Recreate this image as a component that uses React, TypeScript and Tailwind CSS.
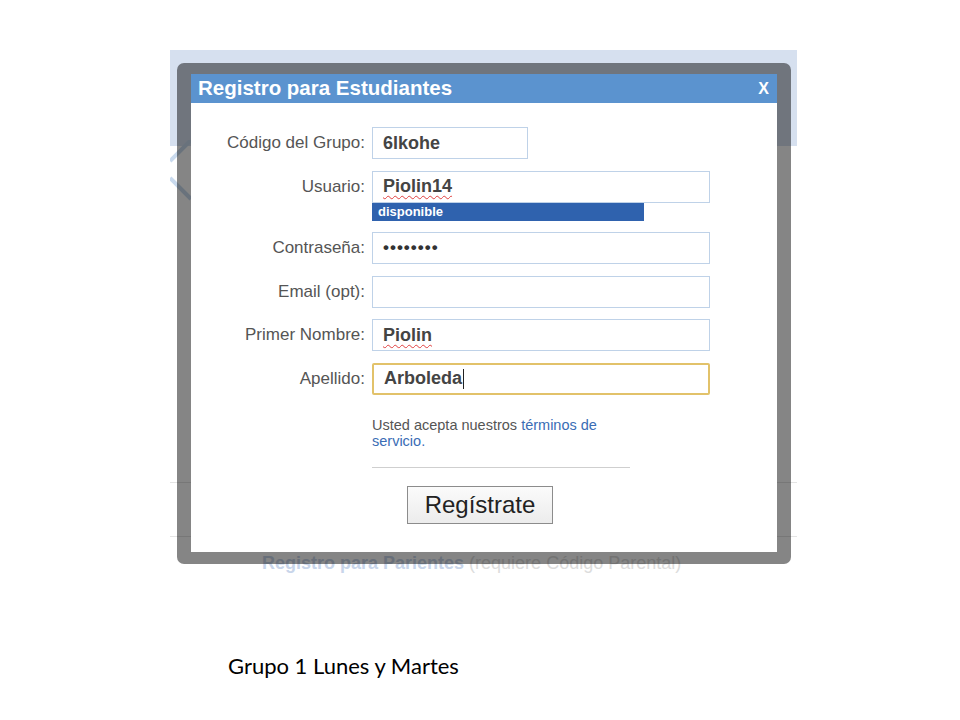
const fields = [
  { label: 'Código del Grupo:', value: '6lkohe', width: 'w-[156px]' },
  { label: 'Usuario:', value: 'Piolin14', width: 'w-[338px]', spell: true, hint: 'disponible' },
  { label: 'Contraseña:', value: '••••••••', width: 'w-[338px]', password: true },
  { label: 'Email (opt):', value: '', width: 'w-[338px]' },
  { label: 'Primer Nombre:', value: 'Piolin', width: 'w-[338px]', spell: true },
  { label: 'Apellido:', value: 'Arboleda', width: 'w-[338px]', focus: true },
];

function Field({ f }: { f: (typeof fields)[number] }) {
  return (
    <div className="flex items-start">
      <div className="flex h-[32px] w-[181px] items-center justify-end pr-[7px] text-[17px] text-[#555]">
        {f.label}
      </div>
      <div className="flex flex-col">
        <div
          className={`flex h-[32px] items-center border px-[10px] text-[18px] font-bold text-[#444] ${f.width} ${
            f.focus ? 'rounded-[2px] border-[#e2c26a] border-2 px-[9px]' : 'border-[#bfd2e8]'
          }`}
        >
          {f.password ? (
            <span className="text-[17px] tracking-[1px] text-[#333]">{f.value}</span>
          ) : f.spell ? (
            <span className="underline decoration-wavy decoration-[#e04040] decoration-1 underline-offset-[3px]">
              {f.value}
            </span>
          ) : (
            <span>{f.value}</span>
          )}
          {f.focus && <span className="ml-[1px] h-[20px] w-px bg-[#222]" />}
        </div>
        {f.hint && (
          <div className="flex h-[18px] w-[272px] items-center bg-[#2f62ae] px-[6px] text-[13px] font-bold leading-none text-white">
            {f.hint}
          </div>
        )}
      </div>
    </div>
  );
}

export default function App() {
  return (
    <div className="relative h-[720px] w-[960px] overflow-hidden bg-white font-['Liberation_Sans',Arial,sans-serif]">
      {/* page behind the dialog */}
      <div className="pl-[170px] pt-[50px]">
        <div className="relative w-[627px]">
          <div className="h-[96px] bg-[#d6e0ef]" />
          <svg className="absolute left-0 top-[90px]" width="30" height="70" viewBox="0 0 30 70">
            <path d="M0 21 L21 0" stroke="#c9daee" strokeWidth="4" />
            <path d="M0 38 L21 59" stroke="#c9daee" strokeWidth="4" />
          </svg>
          <div className="h-[337px] border-b border-[#e4e4e4]" />
          <div className="h-[54px] border-b border-[#e4e4e4]" />
          <div className="pl-[92px] pt-[14px] text-[18px] leading-[24px]">
            <span className="font-bold text-[#c8d5ea]">Registro para Parientes</span>{' '}
            <span className="text-[#dcdcdc]">(requiere Código Parental)</span>
          </div>
        </div>
      </div>

      <p className="pl-[228px] pt-[77px] font-['Lato',sans-serif] text-[22px] leading-[28px] text-black">
        Grupo 1 Lunes y Martes
      </p>

      {/* dialog */}
      <div className="absolute left-[177px] top-[63px] w-[614px] rounded-[7px] bg-black/[0.48] px-[14px] pb-[12px] pt-[11px]">
        <div className="bg-white">
          <div className="flex h-[29px] items-center justify-between bg-[#5b93cf] pl-[7px] pr-[8px] text-white">
            <span className="text-[20.5px] font-bold">Registro para Estudiantes</span>
            <span className="text-[16px] font-bold">X</span>
          </div>
          <div className="flex flex-col gap-[11.5px] pt-[24px]">
            {fields.map((f) => (
              <Field key={f.label} f={f} />
            ))}
          </div>
          <div className="ml-[181px] w-[258px] pb-[28px]">
            <p className="mt-[22px] text-[14.5px] leading-[16px] text-[#555]">
              Usted acepta nuestros <span className="text-[#3a6db5]">términos de</span>
              <br />
              <span className="text-[#3a6db5]">servicio.</span>
            </p>
            <div className="mt-[18px] h-px bg-[#cfcfcf]" />
            <button className="ml-[35px] mt-[18px] h-[38px] w-[146px] border border-[#8c8c8c] bg-gradient-to-b from-[#fbfbfb] to-[#ececec] text-[24px] text-[#222]">
              Regístrate
            </button>
          </div>
        </div>
      </div>
    </div>
  );
}
